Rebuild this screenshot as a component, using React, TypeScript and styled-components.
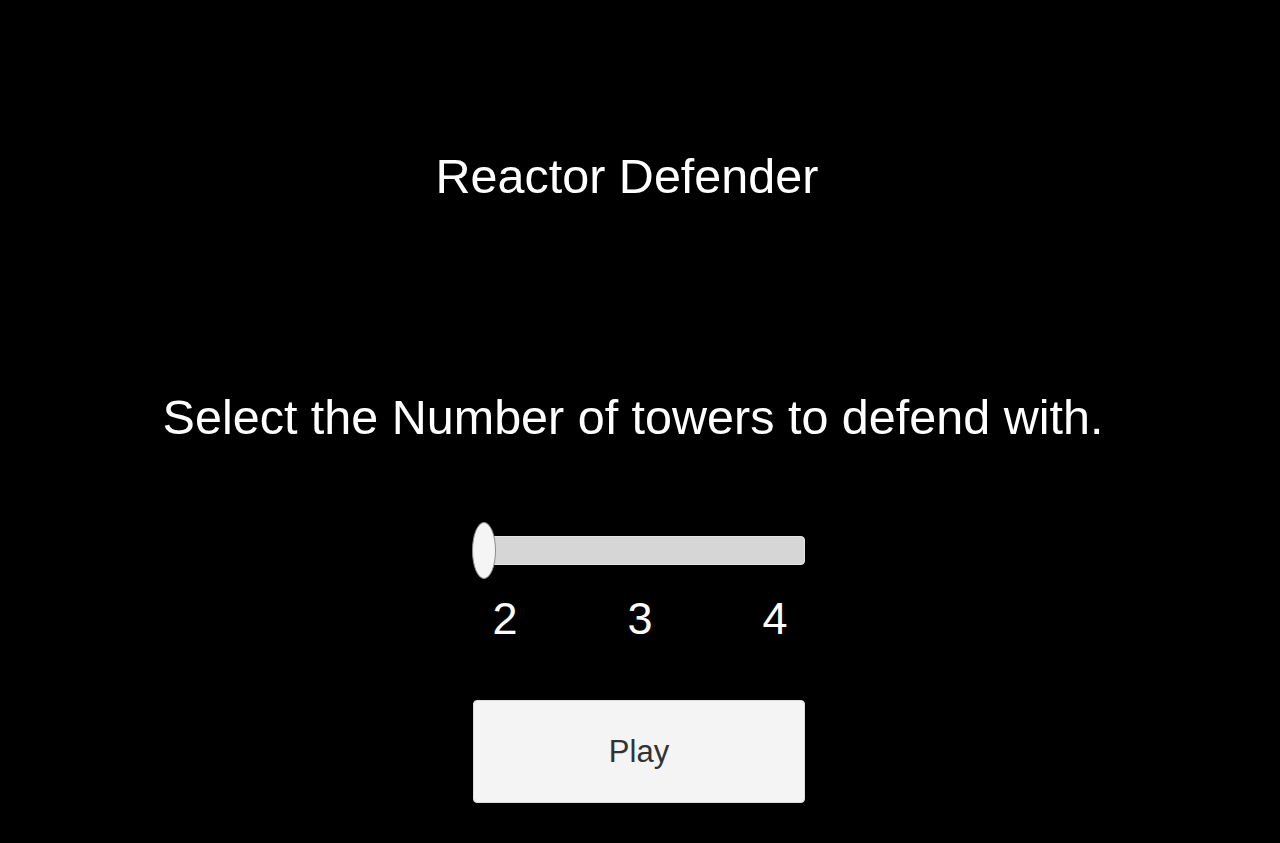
import React, { useState } from "react";
import styled, { createGlobalStyle } from "styled-components";

const GlobalStyle = createGlobalStyle`
  html, body {
    margin: 0;
    padding: 0;
    background: #000;
    height: 100%;
  }
  body {
    font-family: "Liberation Sans", Arial, sans-serif;
    color: #fff;
    overflow: hidden;
  }
`;

const Screen = styled.main`
  width: 1280px;
  height: 843px;
  background: #000;
  display: flex;
  flex-direction: column;
  align-items: center;
  padding-top: 152px;
  box-sizing: border-box;
`;

const Title = styled.h1<{ $shift: number }>`
  margin: 0;
  font-size: 48.5px;
  line-height: 48px;
  font-weight: 400;
  color: #fff;
  padding-right: ${(p) => p.$shift}px;
`;

const Prompt = styled.p<{ $shift: number }>`
  margin: 193px 0 0;
  font-size: 48.5px;
  line-height: 48px;
  color: #fff;
  padding-right: ${(p) => p.$shift}px;
`;

const Slider = styled.div`
  position: relative;
  margin-top: 81px;
  width: 333px;
  height: 57px;
  display: flex;
  align-items: center;
  margin-right: 3px;
`;

const Track = styled.div`
  flex: 1;
  margin-left: 12px;
  height: 29px;
  background: #d6d6d6;
  border: 1px solid #e4e4e4;
  border-radius: 4px;
  box-sizing: border-box;
`;

const Knob = styled.div`
  position: absolute;
  top: 0;
  width: 24px;
  height: 57px;
  border-radius: 50%;
  background: #f5f5f5;
  border: 1px solid #8c8c8c;
  box-sizing: border-box;
  cursor: pointer;
`;

const Ticks = styled.div`
  margin-top: 17px;
  width: 405px;
  display: grid;
  grid-template-columns: repeat(3, 1fr);
`;

const Tick = styled.span`
  text-align: center;
  font-size: 45px;
  line-height: 45px;
  color: #fff;
`;

const PlayButton = styled.button`
  margin-top: 59px;
  width: 332px;
  height: 103px;
  margin-right: 2px;
  background: #f4f4f4;
  border: 1px solid #dcdcdc;
  border-radius: 4px;
  font-family: "Liberation Sans", Arial, sans-serif;
  font-size: 31px;
  color: #323232;
  cursor: pointer;
  padding: 0;
`;

const options = [2, 3, 4];

export default function App() {
  const [value, setValue] = useState(0);
  const knobLeft = (value / (options.length - 1)) * (333 - 24);

  return (
    <>
      <GlobalStyle />
      <Screen>
        <Title $shift={26}>Reactor Defender</Title>
        <Prompt $shift={14}>Select the Number of towers to defend with.</Prompt>
        <Slider>
          <Track />
          <Knob
            style={{ left: knobLeft }}
            onClick={() => setValue((value + 1) % options.length)}
          />
        </Slider>
        <Ticks>
          {options.map((n) => (
            <Tick key={n}>{n}</Tick>
          ))}
        </Ticks>
        <PlayButton>Play</PlayButton>
      </Screen>
    </>
  );
}
